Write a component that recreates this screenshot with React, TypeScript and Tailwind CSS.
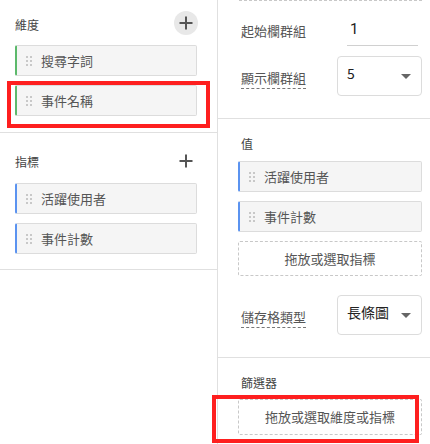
import * as React from 'react';

const font = { fontFamily: '"Noto Sans CJK TC", "Noto Sans", Roboto, sans-serif' };

function Handle() {
  return (
    <div className="grid grid-cols-2 gap-[2px] w-[6px] shrink-0">
      {[0, 1, 2, 3, 4, 5].map((i) => (
        <span key={i} className="w-[2px] h-[2px] bg-[#c8c8c8]" />
      ))}
    </div>
  );
}

function Chip({ label, accent }: { label: string; accent: 'green' | 'blue' }) {
  return (
    <div
      className={
        'h-[31px] flex items-center gap-[9px] pl-[9px] bg-[#f5f5f5] border border-[#dcdcdc] rounded-[2px] border-l-2 ' +
        (accent === 'green' ? 'border-l-[#5cb96b]' : 'border-l-[#5b93f0]')
      }
    >
      <Handle />
      <span className="text-[13px] text-[#555]">{label}</span>
    </div>
  );
}

function Plus() {
  return (
    <svg width="16" height="16" viewBox="0 0 16 16">
      <path d="M8 1.5v13M1.5 8h13" stroke="#555" strokeWidth="2" />
    </svg>
  );
}

function Caret() {
  return (
    <svg width="10" height="5" viewBox="0 0 10 5">
      <path d="M0 0h10L5 5z" fill="#666" />
    </svg>
  );
}

function Select({ value }: { value: string }) {
  return (
    <div className="w-[85px] h-[40px] border border-[#dcdcdc] rounded-[4px] flex items-center justify-between pl-[9px] pr-[10px]">
      <span className="text-[14px] text-[#222] -mt-[6px]">{value}</span>
      <Caret />
    </div>
  );
}

function DropZone({ label }: { label: string }) {
  return (
    <div className="h-[35px] border border-dashed border-[#c8c8c8] rounded-[2px] flex items-center justify-center">
      <span className="text-[13px] text-[#555]">{label}</span>
    </div>
  );
}

function RedMark({ className }: { className: string }) {
  return <div className={'absolute border-4 border-[#fe1f1f] pointer-events-none ' + className} />;
}

export default function App() {
  return (
    <div className="w-[430px] h-[444px] bg-white flex overflow-hidden" style={font}>
      {/* 左側：維度 / 指標 */}
      <div className="w-[218px] shrink-0 border-r border-[#e0e0e0]">
        <div className="pt-[11px] pb-[16px] pl-[15px] pr-[20px] border-b border-[#e0e0e0]">
          <div className="h-6 flex items-center justify-between">
            <span className="text-[12px] text-[#444] mt-[4px]">維度</span>
            <div className="w-6 h-6 rounded-full bg-[#e8e8e8] flex items-center justify-center -mr-[1px]">
              <Plus />
            </div>
          </div>
          <div className="mt-[10px] flex flex-col gap-[9px]">
            <Chip label="搜尋字詞" accent="green" />
            <div className="relative">
              <Chip label="事件名稱" accent="green" />
              <RedMark className="-left-[8px] -top-[4px] -right-[13px] -bottom-[12px]" />
            </div>
          </div>
        </div>
        <div className="pt-[16px] pb-[15px] pl-[15px] pr-[20px] border-b border-[#e0e0e0]">
          <div className="h-6 flex items-center justify-between">
            <span className="text-[12px] text-[#444] mt-[1px]">指標</span>
            <div className="w-6 h-6 flex items-center justify-center -mr-[1px]">
              <Plus />
            </div>
          </div>
          <div className="mt-[10px] flex flex-col gap-[9px]">
            <Chip label="活躍使用者" accent="blue" />
            <Chip label="事件計數" accent="blue" />
          </div>
        </div>
      </div>

      {/* 右側：設定 */}
      <div className="flex-1">
        <div className="pl-[20px] pr-[8px] pb-[22px] border-b border-[#e0e0e0]">
          <div className="ml-[1px] border-t border-dashed border-[#c8c8c8]" />
          <div className="mt-[15px] h-[30px] flex items-center">
            <span className="w-[109px] pl-[3px] text-[13px] text-[#555]">起始欄群組</span>
            <div className="w-[71px] h-full border-b border-[#d0d0d0] flex items-center pl-[3px]">
              <span className="text-[15px] text-[#222] -mt-[2px]" style={{ fontFamily: 'Roboto, sans-serif' }}>1</span>
            </div>
          </div>
          <div className="mt-[10px] flex items-center">
            <div className="w-[99px] pl-[3px]">
              <span className="text-[13px] text-[#555] border-b border-dashed border-[#777] pb-[1px] mt-[3px] inline-block leading-[18px]">
                顯示欄群組
              </span>
            </div>
            <Select value="5" />
          </div>
        </div>

        <div className="pt-[16px] pl-[20px] pr-[8px] pb-[22px] border-b border-[#e0e0e0]">
          <div className="pl-[3px] text-[12px] text-[#444] leading-[18px]">值</div>
          <div className="mt-[8px] flex flex-col gap-[9px]">
            <Chip label="活躍使用者" accent="blue" />
            <Chip label="事件計數" accent="blue" />
            <DropZone label="拖放或選取指標" />
          </div>
          <div className="mt-[19px] flex items-center">
            <div className="w-[99px] pl-[3px]">
              <span className="text-[13px] text-[#555] border-b border-dashed border-[#777] pb-[1px] mt-[3px] inline-block leading-[18px]">
                儲存格類型
              </span>
            </div>
            <Select value="長條圖" />
          </div>
        </div>

        <div className="pt-[16px] pl-[20px] pr-[8px]">
          <div className="pl-[3px] text-[12px] text-[#444] leading-[18px]">篩選器</div>
          <div className="mt-[7px] relative">
            <div className="h-[36px] border border-dashed border-[#c8c8c8] rounded-[2px] flex items-center justify-center">
              <span className="text-[13px] text-[#555]">拖放或選取維度或指標</span>
            </div>
            <RedMark className="-left-[26px] -top-[4px] right-[3px] -bottom-[8px]" />
          </div>
        </div>
      </div>
    </div>
  );
}
